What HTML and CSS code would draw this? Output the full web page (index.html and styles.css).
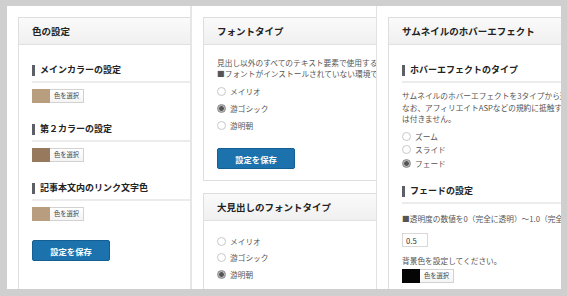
FILE: index.html
```html
<!DOCTYPE html>
<html lang="ja">
<head>
    <meta charset="UTF-8">
    <meta name="viewport" content="width=device-width, initial-scale=1.0">
    <title>テーマ設定</title>
    <link rel="stylesheet" href="styles.css">
</head>
<body>

    <div class="desk">
        <!-- 色の設定 -->
        <div class="sheet first">
            <div class="box open">
                <div class="box-head">色の設定</div>
                <div class="box-body">
                    <h3 class="sub">メインカラーの設定</h3>
                    <div class="picker">
                        <span class="swatch main"></span>
                        <span class="pick">色を選択</span>
                    </div>

                    <h3 class="sub">第２カラーの設定</h3>
                    <div class="picker">
                        <span class="swatch second"></span>
                        <span class="pick">色を選択</span>
                    </div>

                    <h3 class="sub">記事本文内のリンク文字色</h3>
                    <div class="picker">
                        <span class="swatch main"></span>
                        <span class="pick">色を選択</span>
                    </div>

                    <button type="button" class="save">設定を保存</button>
                </div>
            </div>
        </div>

        <!-- フォントタイプ -->
        <div class="sheet second-sheet">
            <div class="box">
                <div class="box-head">フォントタイプ</div>
                <div class="box-body font-body">
                    <p class="note">見出し以外のすべてのテキスト要素で使用する<br>■フォントがインストールされていない環境では</p>
                    <ul class="choices">
                        <li><span class="radio"></span>メイリオ</li>
                        <li><span class="radio on"></span>游ゴシック</li>
                        <li><span class="radio"></span>游明朝</li>
                    </ul>
                    <button type="button" class="save">設定を保存</button>
                </div>
            </div>

            <div class="box open">
                <div class="box-head">大見出しのフォントタイプ</div>
                <div class="box-body heading-body">
                    <ul class="choices tight">
                        <li><span class="radio"></span>メイリオ</li>
                        <li><span class="radio"></span>游ゴシック</li>
                        <li><span class="radio on"></span>游明朝</li>
                    </ul>
                </div>
            </div>
        </div>

        <!-- サムネイルのホバーエフェクト -->
        <div class="sheet third">
            <div class="box open">
                <div class="box-head">サムネイルのホバーエフェクト</div>
                <div class="box-body">
                    <h3 class="sub">ホバーエフェクトのタイプ</h3>
                    <p class="note hover-note">サムネイルのホバーエフェクトを3タイプから選<br>なお、アフィリエイトASPなどの規約に抵触す<br>は付きません。</p>
                    <ul class="choices small">
                        <li><span class="radio"></span>ズーム</li>
                        <li><span class="radio"></span>スライド</li>
                        <li><span class="radio on"></span>フェード</li>
                    </ul>

                    <h3 class="sub">フェードの設定</h3>
                    <p class="note fade-note">■透明度の数値を0（完全に透明）〜1.0（完全</p>
                    <input type="text" class="num" value="0.5">
                    <p class="note bg-note">背景色を設定してください。</p>
                    <div class="picker">
                        <span class="swatch black"></span>
                        <span class="pick">色を選択</span>
                    </div>
                </div>
            </div>
        </div>
    </div>

</body>
</html>
```

FILE: styles.css
```css
body {
    margin: 0;
    width: 567px;
    height: 296px;
    overflow: hidden;
    background: #cfcfcf;
    font-family: "Noto Sans CJK JP", sans-serif;
    color: #555;
}
.desk {
    display: flex;
    padding: 6px 0 0 7px;
    height: 283px;
}
.sheet {
    background: #fff;
    overflow: hidden;
    padding: 11px 0 0 11px;
    box-sizing: border-box;
    height: 283px;
    display: flex;
    flex-direction: column;
    gap: 12px;
}
.first {
    width: 185px;
    border-right: 2px solid #e6e6e6;
}
.second-sheet {
    width: 185px;
    border-right: 1px solid #e2e2e2;
}
.third {
    width: 184px;
}
.box {
    flex: none;
    width: 260px;
    border: 1px solid #dedede;
    background: #fff;
}
.box.open {
    padding-bottom: 80px;
}
.box-head {
    height: 26px;
    line-height: 26px;
    padding-left: 13px;
    background: linear-gradient(#fafafa, #f0f0f0);
    border-bottom: 1px solid #e0e0e0;
    font-size: 9.5px;
    font-weight: bold;
    color: #222;
    white-space: nowrap;
}
.box-body {
    padding: 18px 0 0 13px;
}
.sub {
    margin: 0;
    position: relative;
    padding: 0 0 4px 8px;
    line-height: 14px;
    font-size: 9px;
    font-weight: bold;
    color: #222;
    border-bottom: 2px solid #ececec;
    white-space: nowrap;
}
.sub::before {
    content: "";
    position: absolute;
    left: 0;
    top: 2px;
    width: 3px;
    height: 11px;
    background: #5c5f66;
}
.picker {
    display: flex;
    margin: 6px 0 19px;
    height: 14px;
}
.swatch {
    width: 18px;
    height: 14px;
}
.swatch.main {
    background: #b89d7e;
}
.swatch.second {
    background: #977a5d;
}
.swatch.black {
    background: #050505;
}
.pick {
    width: 33px;
    height: 12px;
    line-height: 12px;
    border: 1px solid #d2d2d2;
    border-left: none;
    background: linear-gradient(#fff, #f4f4f4);
    font-size: 6.3px;
    color: #444;
    text-align: center;
}
.save {
    display: block;
    margin: 16px 0 0;
    width: 78px;
    height: 21px;
    padding: 0;
    border: 1px solid #135f93;
    border-radius: 2px;
    background: #1c72ad;
    color: #fff;
    font-family: inherit;
    font-size: 8.3px;
    font-weight: bold;
}
.note {
    margin: 0;
    font-size: 7.7px;
    line-height: 11px;
    color: #555;
    white-space: nowrap;
}
.font-body {
    padding: 12px 0 11px 13px;
}
.font-body .save {
    margin-top: 14px;
}
.choices {
    list-style: none;
    margin: 4px 0 0;
    padding: 0;
}
.choices li {
    display: flex;
    align-items: center;
    height: 17px;
    font-size: 7.7px;
    color: #555;
}
.choices.tight li {
    height: 16.5px;
}
.choices.small li {
    height: 13.5px;
}
.radio {
    width: 7px;
    height: 7px;
    margin-right: 4px;
    border: 1px solid #c8c8c8;
    border-radius: 50%;
    background: #fff;
}
.radio.on {
    border-color: #8a8a8a;
    background: radial-gradient(circle, #555 0 2px, #b5b5b5 2.6px);
}
.heading-body {
    padding-top: 8px;
}
.hover-note {
    margin-top: 7px;
    line-height: 11.5px;
}
.choices.small {
    margin: 5px 0 14px;
}
.fade-note {
    margin-top: 9px;
}
.num {
    display: block;
    margin: 9px 0 0;
    width: 26px;
    height: 14px;
    padding: 0 0 0 3px;
    box-sizing: border-box;
    border: 1px solid #d8d8d8;
    font-family: inherit;
    font-size: 7.7px;
    color: #333;
}
.bg-note {
    margin-top: 8px;
}
.third .picker {
    margin-top: 3px;
}
```
